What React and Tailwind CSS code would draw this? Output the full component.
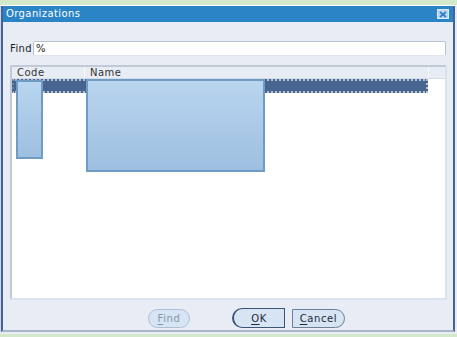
import React from 'react';

const font = { fontFamily: '"DejaVu Sans", Verdana, sans-serif' };

const Mnemonic = ({ first, rest }) => (
  <span>
    <span className="underline underline-offset-2">{first}</span>
    {rest}
  </span>
);

export default function App() {
  return (
    <div className="w-[457px] h-[337px] overflow-hidden bg-[#e8edf5] flex flex-col" style={font}>
      {/* page behind the dialog */}
      <div className="h-[5px] bg-[#d4e8cb]" />
      <div className="h-[1px] bg-white" />

      <div className="flex">
        <div className="w-[1px] bg-[#cfd6e0]" />
        {/* dialog window */}
        <div className="w-[454px] h-[326px] flex flex-col border-l-2 border-r-2 border-b-2 border-[#44639a] border-b-[#a9b6c8]">
          {/* title bar */}
          <div className="h-[16px] bg-[#2a84c6] flex items-center justify-between pl-[3px] pr-[4px]">
            <span className="text-white text-[10px] tracking-[0.4px] leading-none">Organizations</span>
            <div className="w-[12px] h-[10px] bg-[#bcd6f0] border border-[#dbe9f7] flex items-center justify-center">
              <svg width="8" height="7" viewBox="0 0 8 7">
                <path d="M1 1 L7 6 M7 1 L1 6" stroke="#2f80c6" strokeWidth="1.8" />
              </svg>
            </div>
          </div>

          {/* body */}
          <div className="flex-1 bg-[#e8edf5] flex flex-col">
            {/* find row */}
            <div className="flex items-center mt-[19px] pl-[7px] pr-[7px]">
              <span className="text-[10px] text-[#222] tracking-[0.4px] mr-[1px]">Find</span>
              <div className="flex-1 h-[15px] bg-white border border-[#b9c3d0] border-b-[#dfe5ee] rounded-[2px] flex items-center pl-[2px] text-[10px] text-[#222]">
                %
              </div>
            </div>

            {/* results table */}
            <div className="relative mt-[9px] ml-[7px] w-[437px] h-[235px] bg-white border-2 border-[#c1c9d4] border-r-[#d9e2ee] border-b-[#d9e2ee] rounded-[2px] flex flex-col">
              <div className="h-[12px] bg-[#e8edf5] border-b border-[#d3dce8] flex text-[10px] text-[#333] tracking-[0.5px] leading-[11px]">
                <div className="w-[73px] pl-[5px] border-r border-[#f7f9fc]">Code</div>
                <div className="w-[344px] pl-[5px] border-r border-[#f7f9fc]">Name</div>
                <div className="flex-1" />
              </div>
              <div className="h-[14px] w-[416px] bg-[#48658f] border-2 border-dotted border-[#b3c1d6] border-l-[#6c84a8]" />

              {/* drag/highlight boxes over the grid */}
              <div className="absolute left-[4px] top-[13px] w-[27px] h-[79px] border-2 border-[#6f9cc4] bg-gradient-to-b from-[#b9d5ef] to-[#9ebfe0]" />
              <div className="absolute left-[74px] top-[12px] w-[179px] h-[93px] border-2 border-[#6f9cc4] bg-gradient-to-b from-[#b9d5ef] to-[#9ebfe0]" />
            </div>

            {/* buttons */}
            <div className="flex items-center mt-[8px] text-[10px] tracking-[0.6px]">
              <button className="ml-[145px] w-[42px] h-[19px] rounded-full bg-[#d6e4f3] border border-[#aebfd3] text-[#8797a9] flex items-center justify-center">
                <Mnemonic first="F" rest="ind" />
              </button>
              <button className="ml-[42px] w-[53px] h-[20px] rounded-l-full rounded-r-[3px] bg-[#d6e4f3] border border-[#3d5577] border-l-2 text-[#1d2a3a] flex items-center justify-center">
                <Mnemonic first="O" rest="K" />
              </button>
              <button className="ml-[7px] w-[53px] h-[19px] rounded-r-full rounded-l-[3px] bg-[#d6e4f3] border border-[#6d8098] text-[#1d2a3a] flex items-center justify-center">
                <Mnemonic first="C" rest="ancel" />
              </button>
            </div>
          </div>
        </div>
      </div>

      <div className="h-[2px]" />
      <div className="flex-1 bg-[#d4e8cb]" />
    </div>
  );
}
